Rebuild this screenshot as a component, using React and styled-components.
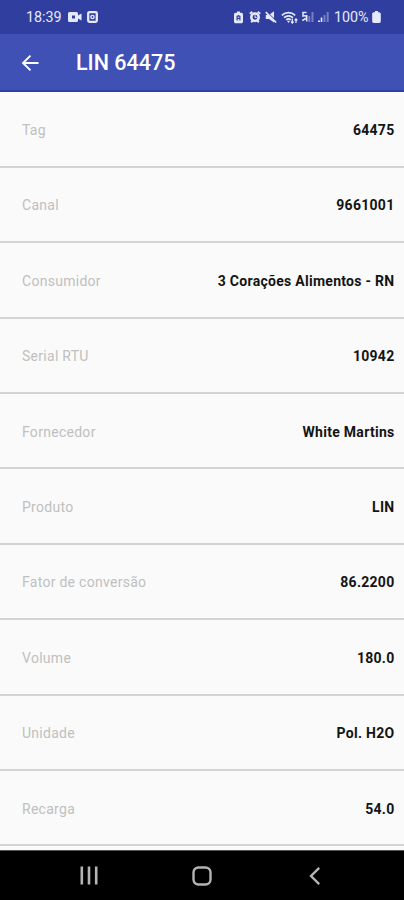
import React from 'react';
import styled, { createGlobalStyle } from 'styled-components';

const GlobalStyle = createGlobalStyle`
  * {
    box-sizing: border-box;
  }

  body {
    margin: 0;
    font-family: Roboto, sans-serif;
    background-color: #fafafa;
  }
`;

const Screen = styled.div`
  display: flex;
  flex-direction: column;
  width: 404px;
  height: 900px;
  overflow: hidden;
  background-color: #fafafa;
`;

const StatusBar = styled.div`
  display: flex;
  justify-content: space-between;
  align-items: center;
  height: 34px;
  flex-shrink: 0;
  padding: 0 23px 0 26px;
  background-color: #303f9f;
  color: #e6e9fa;
`;

const StatusGroup = styled.div`
  display: flex;
  align-items: center;
  gap: ${({ $gap }) => $gap}px;

  > svg {
    display: block;
    flex-shrink: 0;
  }
`;

const StatusText = styled.span`
  width: ${({ $width }) => $width}px;
  font-size: ${({ $size }) => $size}px;
  line-height: 16px;
  white-space: nowrap;
`;

const Toolbar = styled.header`
  display: flex;
  align-items: center;
  height: 58px;
  flex-shrink: 0;
  padding: 2px 0 0 21px;
  background-color: #3f51b5;
  border-bottom: 2px solid #2b40a3;
`;

const BackButton = styled.button`
  display: flex;
  width: 55px;
  padding: 0;
  border: 0;
  background: none;
  color: white;
`;

const Title = styled.h1`
  margin: 0;
  color: white;
  font-size: 21.5px;
  font-weight: 500;
  line-height: 24px;
`;

const List = styled.div`
  flex: 1;
  min-height: 0;
  padding-top: 0.4px;
  overflow: hidden;
`;

const Row = styled.div`
  display: flex;
  justify-content: space-between;
  align-items: center;
  height: 75.4px;
  padding: 2px 9.5px 0 22px;
  border-bottom: 2px solid #d3d3d3;
  font-size: 14px;
  line-height: 18px;
  letter-spacing: 0.28px;
`;

const Label = styled.span`
  color: #c0c0c0;
`;

const Value = styled.span`
  color: #141414;
  font-weight: 700;
`;

const NavBar = styled.nav`
  display: flex;
  align-items: center;
  gap: 94px;
  height: 50px;
  flex-shrink: 0;
  padding-left: 80px;
  border-top: 1px solid #555;
  background-color: black;
  color: #b4b4b4;

  > svg {
    display: block;
  }
`;

const VideoIcon = () => (
  <svg width="14" height="12" viewBox="0 0 14 12" fill="currentColor">
    <path
      fillRule="evenodd"
      d="M1.500 1h7A1.500 1.500 0 0 1 10 2.500v2L13.500 2.500v7L10 7.500v2A1.500 1.500 0 0 1 8.500 11h-7A1.500 1.500 0 0 1 0 9.500v-7A1.500 1.500 0 0 1 1.500 1zM4 4.500v3h3v-3z"
    />
  </svg>
);

const CaptureIcon = () => (
  <svg width="11" height="12" viewBox="0 0 11 12" fill="none" stroke="currentColor">
    <rect x="1.200" y="1.200" width="8.600" height="9.600" rx="1.200" strokeWidth="2.300" />
    <circle cx="5.500" cy="6" r="1.600" strokeWidth="1.400" />
  </svg>
);

const SaverIcon = () => (
  <svg width="11" height="13" viewBox="0 0 11 13" fill="currentColor">
    <path
      fillRule="evenodd"
      d="M3 .5h3v1.300h1.300C8.300 1.800 9 2.500 9 3.500v7c0 1-.7 1.800-1.700 1.800H1.700C.7 12.300 0 11.500 0 10.500v-7c0-1 .7-1.700 1.700-1.700H3zM2.500 5v4.500h1.200V8h1.600v1.500h1.200V5L4.500 4zm1.200.8h1.600v1H3.700z"
    />
  </svg>
);

const AlarmIcon = () => (
  <svg width="12" height="12" viewBox="0 0 12 12" fill="none" stroke="currentColor">
    <path d="M.8 2.800 3.300.9M11.200 2.800 8.700.9M2.200 11.200l1.300-1.400M9.800 11.200l-1.300-1.400" strokeWidth="2" />
    <circle cx="6" cy="6.300" r="3.700" strokeWidth="2.500" />
    <path d="M6 4.200v2.300h1.700" strokeWidth="1" />
  </svg>
);

const MuteIcon = () => (
  <svg width="12" height="12" viewBox="0 0 12 12" fill="currentColor">
    <path d="M.8 4h3.200l5-3.800v11.300L4 8H.8z" />
    <path d="M1.800.8l10 10" stroke="#303f9f" strokeWidth="1.200" />
    <path d="M.8 1.200l10.300 10.300" stroke="currentColor" strokeWidth="1.700" />
  </svg>
);

const WifiIcon = () => (
  <svg width="17" height="13" viewBox="0 0 17 13" fill="none" stroke="currentColor">
    <path
      d="M.8 4.300c3.900-3.500 9.500-3.500 13.400 0M3 6.700c2.700-2.300 6.300-2.300 9 0M5.200 8.900c1.400-1.200 3.200-1.200 4.600 0"
      strokeWidth="1.700"
    />
    <path d="M6 9.800h3l-1.500 2.200z" fill="currentColor" stroke="none" />
    <path d="M11.300 7.500v4.500M9.900 10.600l1.400 1.500 1.400-1.500M15 12V8M13.600 9.300 15 7.800l1.400 1.500" strokeWidth="1.200" />
  </svg>
);

const SignalFiveIcon = () => (
  <svg width="12" height="12" viewBox="0 0 12 12" fill="none" stroke="currentColor">
    <path d="M4.500 1.500H1V5c2.400-.8 3.300.2 3.300 1.600M.3 9.500l3.500-2M4.700 4v6.500" strokeWidth="1.500" />
    <path d="M7.300 11V5M10.500 11V1" strokeWidth="2" opacity=".38" />
  </svg>
);

const SignalIcon = () => (
  <svg width="12" height="12" viewBox="0 0 12 12" fill="none" stroke="currentColor">
    <path d="M0 10.300h2M3.500 11V6.500" strokeWidth="1.600" />
    <path d="M6.500 11V4M9.700 11V1" strokeWidth="2" opacity=".38" />
  </svg>
);

const BatteryIcon = () => (
  <svg width="9" height="12" viewBox="0 0 9 12" fill="currentColor">
    <path d="M3 0h3v1.300h1.100C8.100 1.300 8.800 2 8.800 3v7.300c0 1-.7 1.700-1.700 1.700H1.900C.9 12 .2 11.300.2 10.300V3c0-1 .7-1.700 1.700-1.700H3z" />
  </svg>
);

const BackArrow = () => (
  <svg width="19" height="18" viewBox="0 0 19 18" fill="none" stroke="currentColor" strokeWidth="1.900">
    <path d="M17.500 9H2M9.500 1.600 2 9l7.500 7.400" />
  </svg>
);

const RecentsIcon = () => (
  <svg width="18" height="19" viewBox="0 0 18 19" stroke="currentColor" strokeWidth="2.600">
    <path d="M1.800.5v18M9 .5v18M16.200.5v18" />
  </svg>
);

const HomeIcon = () => (
  <svg width="20" height="20" viewBox="0 0 20 20" fill="none" stroke="currentColor" strokeWidth="2.400">
    <rect x="1.500" y="1.500" width="17" height="17" rx="5" />
  </svg>
);

const ChevronIcon = () => (
  <svg width="15" height="20" viewBox="0 0 15 20" fill="none" stroke="currentColor" strokeWidth="2.400">
    <path d="M13.200 1.800 5 10l8.200 8.200" />
  </svg>
);

const rows = [
  { label: 'Tag', value: '64475' },
  { label: 'Canal', value: '9661001' },
  { label: 'Consumidor', value: '3 Corações Alimentos - RN' },
  { label: 'Serial RTU', value: '10942' },
  { label: 'Fornecedor', value: 'White Martins' },
  { label: 'Produto', value: 'LIN' },
  { label: 'Fator de conversão', value: '86.2200' },
  { label: 'Volume', value: '180.0' },
  { label: 'Unidade', value: 'Pol. H2O' },
  { label: 'Recarga', value: '54.0' },
];

const App = () => (
  <>
    <GlobalStyle />
    <Screen>
      <StatusBar>
        <StatusGroup $gap={5}>
          <StatusText $size={14.3} $width={37}>18:39</StatusText>
          <VideoIcon />
          <CaptureIcon />
        </StatusGroup>
        <StatusGroup $gap={4}>
          <SaverIcon />
          <AlarmIcon />
          <MuteIcon />
          <WifiIcon />
          <SignalFiveIcon />
          <SignalIcon />
          <StatusText $size={14.3} $width={34}>100%</StatusText>
          <BatteryIcon />
        </StatusGroup>
      </StatusBar>
      <Toolbar>
        <BackButton aria-label="Voltar">
          <BackArrow />
        </BackButton>
        <Title>LIN 64475</Title>
      </Toolbar>
      <List>
        {rows.map(({ label, value }) => (
          <Row key={label}>
            <Label>{label}</Label>
            <Value>{value}</Value>
          </Row>
        ))}
      </List>
      <NavBar>
        <RecentsIcon />
        <HomeIcon />
        <ChevronIcon />
      </NavBar>
    </Screen>
  </>
);

export default App;
